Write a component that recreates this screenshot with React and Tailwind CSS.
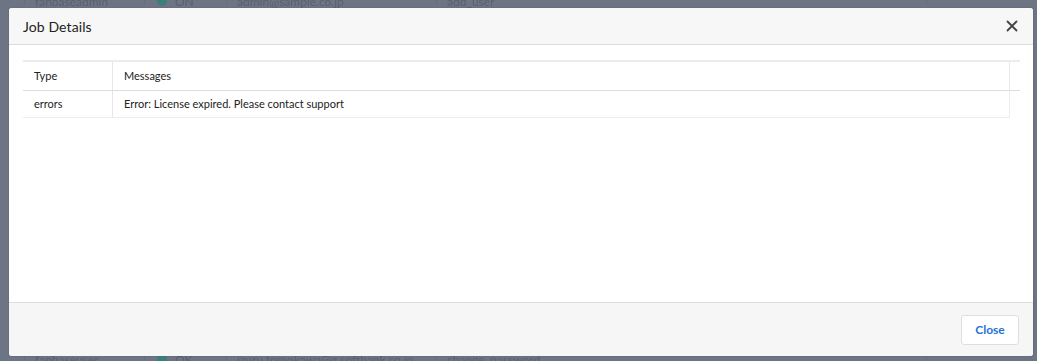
const bgRows = [
  { name: "fanbaseadmin", status: "ON", email: "admin@sample.co.jp", action: "add_user" },
  { name: "fanbaseuser", status: "OK", email: "izuru.tomokawa@g.softbank.co.jp", action: "change_password" },
];

const BgRow = ({ row, align }) => (
  <div className={`flex h-[10px] text-[12px] text-[#59616f] leading-none blur-[0.4px] ${align}`}>
    <div className="w-[25px] h-full border-r border-[#666e7d]" />
    <div className="w-[120px] pl-[10px] border-r border-[#666e7d] h-full">{row.name}</div>
    <div className="w-[82px] pl-[12px] flex gap-2 h-full border-r border-[#666e7d]">
      <span className="w-[10px] h-[10px] rounded-full bg-[#3a7f78]" />
      {row.status}
    </div>
    <div className="w-[210px] pl-[10px] h-full border-r border-[#666e7d]">{row.email}</div>
    <div className="w-[490px] pl-[10px] h-full border-r border-[#666e7d]">{row.action}</div>
  </div>
);

const Background = () => (
  <div className="h-[361px] w-full bg-[#6d7585] overflow-hidden flex flex-col justify-between">
    <div className="-mt-[4px]">
      <BgRow row={bgRows[0]} align="items-start" />
    </div>
    <div className="-mb-[3px]">
      <BgRow row={bgRows[1]} align="items-start" />
    </div>
  </div>
);

const App = () => {
  return (
    <div className="relative w-[1037px] h-[361px] font-['Lato','Noto_Sans',sans-serif]">
      <Background />

      <div className="absolute left-[9px] top-[8px] w-[1024px] h-[348px] bg-white rounded-[3px] flex flex-col overflow-hidden shadow-[0_0_2px_rgba(0,0,0,0.2)]">
        <div className="h-[37px] bg-[#f7f7f7] border-b border-[#dcdcdc] flex items-center justify-between pl-[14px] pr-[15px]">
          <h2 className="text-[14px] text-[#222] tracking-[0.1px]">Job Details</h2>
          <button className="text-[#444]">
            <svg width="12" height="12" viewBox="0 0 12 12" fill="none" stroke="currentColor" strokeWidth="1.8" strokeLinecap="round">
              <path d="M1.5 1.5 L10.5 10.5 M10.5 1.5 L1.5 10.5" />
            </svg>
          </button>
        </div>

        <div className="flex-1 pt-[15px] pl-[14px] pr-[13px]">
          <div className="border-t-2 border-[#ececec]">
            <div className="flex h-[29px] border-b border-[#dedede] text-[11px] text-[#222]">
              <div className="w-[90px] pl-[11px] flex items-center border-r border-[#e6e6e6]">Type</div>
              <div className="flex-1 pl-[11px] flex items-center border-r border-[#e6e6e6]">Messages</div>
              <div className="w-[10px]" />
            </div>
            <div className="flex h-[27px] text-[11px] text-[#222] mr-[10px] border-b border-r border-[#ececec]">
              <div className="w-[90px] pl-[11px] flex items-center border-r border-[#e6e6e6]">errors</div>
              <div className="flex-1 pl-[11px] flex items-center">Error: License expired. Please contact support</div>
            </div>
          </div>
        </div>

        <div className="h-[54px] bg-[#f6f6f6] border-t border-[#dcdcdc] flex items-center justify-end pr-[14px]">
          <button className="h-[30px] w-[58px] bg-white border border-[#dedede] rounded-[3px] text-[12px] font-bold text-[#1f73d6]">
            Close
          </button>
        </div>
      </div>
    </div>
  );
};

export default App;
